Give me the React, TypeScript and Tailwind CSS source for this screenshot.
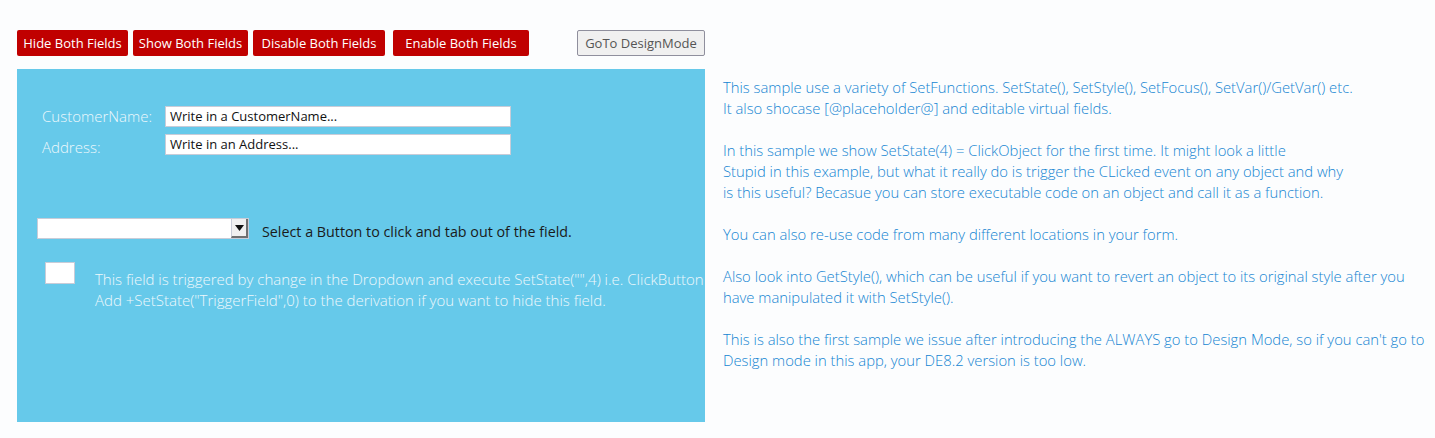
import React from 'react';

const font = { fontFamily: '"Open Sans", "Noto Sans", sans-serif' };

const redButtons = [
  { label: 'Hide Both Fields', w: 'w-[111px]', ml: 'ml-0' },
  { label: 'Show Both Fields', w: 'w-[115px]', ml: 'ml-[5px]' },
  { label: 'Disable Both Fields', w: 'w-[132px]', ml: 'ml-[5px]' },
  { label: 'Enable Both Fields', w: 'w-[136px]', ml: 'ml-[8px]' },
];

const paragraphs = [
  [
    'This sample use a variety of SetFunctions. SetState(), SetStyle(), SetFocus(), SetVar()/GetVar() etc.',
    'It also shocase [@placeholder@] and editable virtual fields.',
  ],
  [
    'In this sample we show SetState(4) = ClickObject for the first time. It might look a little',
    'Stupid in this example, but what it really do is trigger the CLicked event on any object and why',
    'is this useful? Becasue you can store executable code on an object and call it as a function.',
  ],
  ['You can also re-use code from many different locations in your form.'],
  [
    'Also look into GetStyle(), which can be useful if you want to revert an object to its original style after you',
    'have manipulated it with SetStyle().',
  ],
  [
    "This is also the first sample we issue after introducing the ALWAYS go to Design Mode, so if you can't go to",
    'Design mode in this app, your DE8.2 version is too low.',
  ],
];

export default function App() {
  return (
    <div className="w-[1435px] h-[438px] bg-[#fcfdfe] overflow-hidden" style={font}>
      <div className="flex pt-[30px] pl-[17px]">
        {redButtons.map((b) => (
          <button
            key={b.label}
            className={`${b.w} ${b.ml} h-[26px] bg-[#c00000] text-white text-[13px] rounded-[2px] leading-none`}
          >
            {b.label}
          </button>
        ))}
        <button className="ml-[48px] w-[128px] h-[26px] bg-[#f0f0f0] border border-[#8f8f9d] text-[#555] text-[13px] rounded-[2px] leading-none">
          GoTo DesignMode
        </button>
      </div>

      <div className="flex mt-[13px] pl-[17px]">
        <div className="w-[688px] h-[353px] bg-[#66c9ea] shrink-0">
          <div className="pt-[37px] pl-[25px]">
            <div className="flex items-center h-[21px]">
              <span className="w-[123px] text-[15px] text-[#eef8fc] font-light">CustomerName:</span>
              <div className="w-[346px] h-[21px] bg-white border border-[#c8ccd8] text-[13px] text-[#111] pl-[4px] leading-[19px]">
                Write in a CustomerName...
              </div>
            </div>
            <div className="flex items-center h-[21px] mt-[7px]">
              <span className="w-[123px] text-[15px] text-[#eef8fc] font-light pt-[6px]">Address:</span>
              <div className="w-[346px] h-[21px] bg-white border border-[#c8ccd8] text-[13px] text-[#111] pl-[4px] leading-[19px]">
                Write in an Address...
              </div>
            </div>
          </div>

          <div className="flex items-start h-[21px] pl-[20px] mt-[63px]">
            <div className="flex w-[212px] h-[21px] bg-white border border-[#c8ccd8]">
              <div className="flex-1" />
              <div className="w-[17px] h-full bg-[#f0f0f0] border-l border-[#c8ccd8] border-r-2 border-b-2 border-r-[#707070] border-b-[#707070] flex items-center justify-center">
                <svg width="9" height="6" viewBox="0 0 9 6">
                  <path d="M0 0 H9 L4.5 6 Z" fill="#111" />
                </svg>
              </div>
            </div>
            <span className="ml-[13px] mt-[3px] text-[14.3px] leading-[21px] text-[#1a1a1a] whitespace-nowrap">
              Select a Button to click and tab out of the field.
            </span>
          </div>

          <div className="flex pl-[28px] mt-[23px]">
            <div className="w-[30px] h-[22px] bg-white border border-[#c8ccd8] shrink-0" />
            <div className="ml-[20px] mt-[7px] text-[15px] leading-[21px] text-[#eef8fc] font-light whitespace-nowrap">
              <div>This field is triggered by change in the Dropdown and execute SetState("",4) i.e. ClickButton</div>
              <div>Add +SetState("TriggerField",0) to the derivation if you want to hide this field.</div>
            </div>
          </div>
        </div>

        <div className="ml-[18px] pt-[8px] text-[14.8px] leading-[21px] text-[#1585d2] font-light whitespace-nowrap">
          {paragraphs.map((p, i) => (
            <div key={i} className={i > 0 ? 'mt-[21px]' : ''}>
              {p.map((l) => (
                <div key={l}>{l}</div>
              ))}
            </div>
          ))}
        </div>
      </div>
    </div>
  );
}
